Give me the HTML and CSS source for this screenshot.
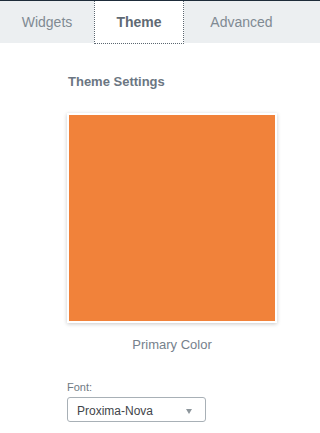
FILE: index.html
```html
<!DOCTYPE html>
<html>
<head>
<meta charset="utf-8">
<link rel="stylesheet" href="styles.css">
</head>
<body>
<div class="topline"></div>
<div class="tabs">
  <div class="tab tab-widgets">Widgets</div>
  <div class="tab tab-theme active">Theme</div>
  <div class="tab tab-advanced">Advanced</div>
</div>
<div class="content">
  <div class="heading">Theme Settings</div>
  <div class="swatch-wrap">
    <div class="swatch"></div>
    <div class="swatch-label">Primary Color</div>
  </div>
  <div class="field-label">Font:</div>
  <div class="select">
    <span class="select-text">Proxima-Nova</span>
    <span class="caret"></span>
  </div>
</div>
</body>
</html>
```

FILE: styles.css
```css
html, body {
  margin: 0;
  padding: 0;
  background: #ffffff;
  font-family: "Liberation Sans", Arial, sans-serif;
  overflow: hidden;
}
.topline {
  height: 1px;
  background: #1e2c3a;
}
.tabs {
  display: flex;
  align-items: flex-start;
  height: 42px;
  background: #eceff1;
}
.tab {
  box-sizing: border-box;
  height: 42px;
  display: flex;
  align-items: center;
  justify-content: center;
  font-size: 14px;
  color: #808a93;
}
.tab-widgets { width: 94px; }
.tab-theme { width: 90px; }
.tab-advanced { width: 107px; padding-left: 8px; }
.tab.active {
  background: #ffffff;
  height: 43px;
  padding-bottom: 1px;
  border-left: 1px dotted #5b6670;
  border-right: 1px dotted #5b6670;
  border-bottom: 1px dotted #5b6670;
  font-weight: bold;
  color: #5f6a74;
}
.content {
  padding-left: 67px;
}
.heading {
  margin-top: 31px;
  padding-left: 1px;
  font-size: 13px;
  line-height: 15px;
  font-weight: bold;
  color: #6b7682;
}
.swatch-wrap {
  width: 210px;
  margin-top: 24px;
}
.swatch {
  box-sizing: border-box;
  width: 210px;
  height: 210px;
  border: 2px solid #ffffff;
  background: #f1823a;
  box-shadow: 0 1px 4px rgba(0, 0, 0, 0.22);
}
.swatch-label {
  margin-top: 14px;
  text-align: center;
  font-size: 13px;
  line-height: 15px;
  color: #76818c;
}
.field-label {
  margin-top: 29px;
  font-size: 11px;
  line-height: 13px;
  color: #6f7a84;
}
.select {
  box-sizing: border-box;
  margin-top: 3px;
  width: 139px;
  height: 25px;
  border: 1px solid #a8b0b6;
  border-radius: 3px;
  display: flex;
  align-items: flex-start;
  padding: 6px 13px 0 9px;
}
.select-text {
  font-size: 12px;
  line-height: 14px;
  color: #3f454a;
}
.caret {
  margin-left: auto;
  margin-top: 5px;
  width: 0;
  height: 0;
  border-left: 3.5px solid transparent;
  border-right: 3.5px solid transparent;
  border-top: 5px solid #8d969c;
}
```
